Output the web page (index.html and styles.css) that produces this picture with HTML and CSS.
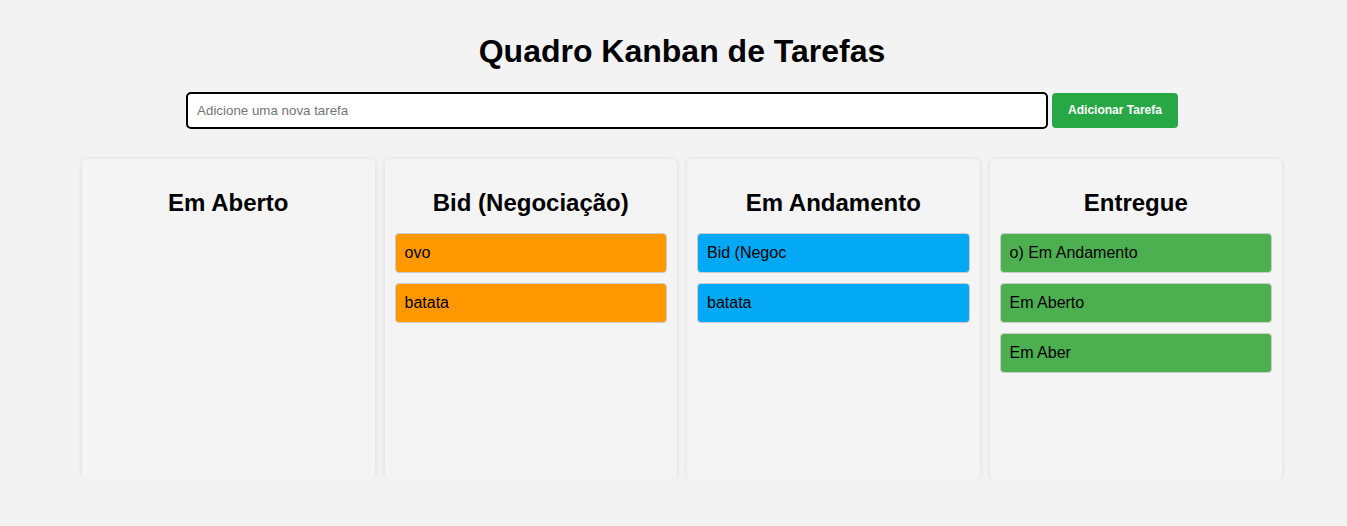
FILE: index.html
```html
<!DOCTYPE html>
<html lang="pt">
<head>
<meta charset="utf-8">
<title>Quadro Kanban de Tarefas</title>
<link rel="stylesheet" href="styles.css">
</head>
<body>
<div class="page">
  <h1 class="title">Quadro Kanban de Tarefas</h1>
  <div class="add-row">
    <input class="task-input" type="text" placeholder="Adicione uma nova tarefa">
    <button class="add-btn">Adicionar Tarefa</button>
  </div>
  <div class="board">
    <section class="column">
      <h2 class="column-title">Em Aberto</h2>
    </section>
    <section class="column">
      <h2 class="column-title">Bid (Negociação)</h2>
      <div class="card card-bid">ovo</div>
      <div class="card card-bid">batata</div>
    </section>
    <section class="column">
      <h2 class="column-title">Em Andamento</h2>
      <div class="card card-progress">Bid (Negoc</div>
      <div class="card card-progress">batata</div>
    </section>
    <section class="column">
      <h2 class="column-title">Entregue</h2>
      <div class="card card-done">o) Em Andamento</div>
      <div class="card card-done">Em Aberto</div>
      <div class="card card-done">Em Aber</div>
    </section>
  </div>
</div>
</body>
</html>
```
FILE: styles.css
```css
html, body {
  margin: 0;
  background: #f3f3f3;
}

body {
  font-family: "Liberation Sans", Arial, sans-serif;
  color: #000;
}

.page {
  padding: 12px 0 0 17px;
}

.title {
  margin: 21.44px 0;
  font-size: 32px;
  font-weight: bold;
  text-align: center;
}

.add-row {
  display: flex;
  justify-content: center;
  align-items: center;
  gap: 4px;
}

.task-input {
  box-sizing: border-box;
  width: 862px;
  height: 37px;
  padding: 0 9px;
  border: 2px solid #000;
  border-radius: 5px;
  background: #fff;
  font-family: "Liberation Sans", Arial, sans-serif;
  font-size: 13.33px;
  color: #000;
  outline: none;
}

.task-input::placeholder {
  color: #757575;
}

.add-btn {
  box-sizing: border-box;
  height: 35px;
  padding: 0 16px;
  border: none;
  border-radius: 4px;
  background: #28a745;
  color: #fff;
  font-family: "Liberation Sans", Arial, sans-serif;
  font-size: 12px;
  font-weight: bold;
  cursor: pointer;
}

.board {
  display: flex;
  gap: 10px;
  width: 1200px;
  margin: 30px auto 0;
}

.column {
  flex: 1 1 0;
  min-height: 300px;
  padding: 10px;
  background: #f4f4f4;
  border-radius: 5px;
  box-shadow: 0 0 5px rgba(0, 0, 0, 0.1);
}

.column-title {
  margin: 20px 0 16px;
  font-size: 24px;
  font-weight: bold;
  text-align: center;
}

.card {
  margin-bottom: 10px;
  padding: 10px 9px;
  border: 1px solid #ccc;
  border-radius: 4px;
  font-size: 16px;
  color: #000;
}

.card-bid {
  background: #ff9800;
}

.card-progress {
  background: #03a9f4;
}

.card-done {
  background: #4caf50;
}
```
